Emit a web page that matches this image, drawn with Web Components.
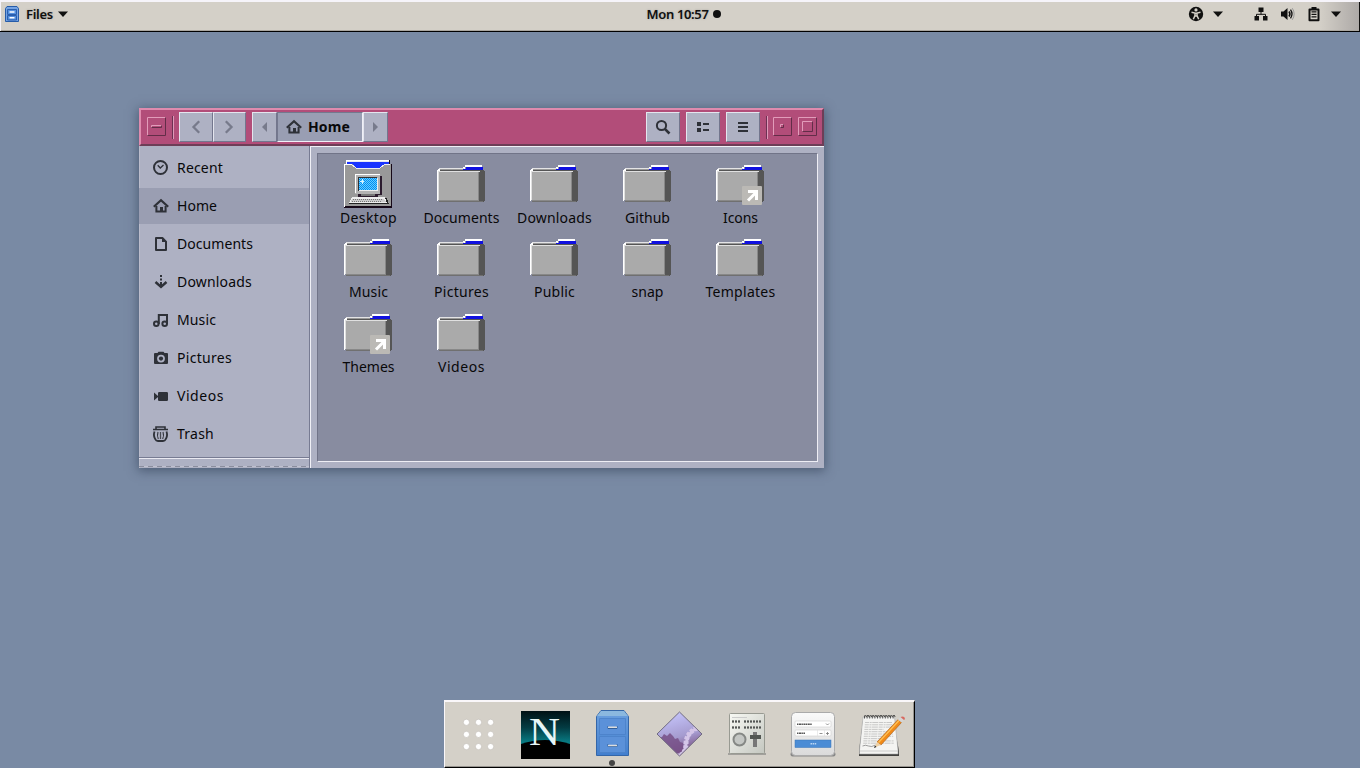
<!DOCTYPE html>
<html lang="en">
<head>
<meta charset="utf-8">
<title>Files</title>
<style>
html,body{margin:0;height:100%;overflow:hidden}
body{font-family:"Noto Sans","Open Sans",sans-serif;font-size:14px;color:#080809}
</style>
</head>
<body>
<retro-desktop></retro-desktop>
<script>
const define=(name,html,setup)=>customElements.define(name,class extends HTMLElement{
  connectedCallback(){
    if(this.shadowRoot)return;
    const t=document.createElement('template');
    t.innerHTML=typeof html==='function'?html(this):html;
    this.attachShadow({mode:'open'}).append(t.content.cloneNode(true));
    if(setup)setup(this);
  }
});

/* Label whose tracking is adjusted to reach the width in its w attribute. */
define('fit-label','<style>:host{display:inline-block;white-space:pre;line-height:20px}span{display:inline-block}</style><span><slot></slot></span>',el=>{
  const w=+el.getAttribute('w'),s=el.shadowRoot.querySelector('span');
  const n=el.textContent.length,nat=s.getBoundingClientRect().width;
  if(w){el.style.width=w+'px';s.style.letterSpacing=((w-nat)/n)+'px'}
});

const glyphs={
clock:'<circle cx="7.500" cy="7.500" r="6.500" fill="none" stroke="currentColor" stroke-width="2"/><path d="M4.700 5.300 7.300 8 10.500 5" fill="none" stroke="currentColor" stroke-width="1.300"/>',
home:'<path d="M.8 8.800 8 2.200 15.200 8.800" fill="none" stroke="currentColor" stroke-width="2.200"/><path d="M3.400 8V13.500H12.600V8" fill="none" stroke="currentColor" stroke-width="2"/><path d="M7 9h3v5H7z" fill="currentColor"/>',
doc:'<path d="M3 2h6.400L13 5.600V14H3z" fill="none" stroke="currentColor" stroke-width="2" stroke-linejoin="round"/><path d="M9 2v4h4z" fill="currentColor"/>',
down:'<path d="M7 1h2v2H7zM7 4.500h2v2H7zM7 8h2v5H7z" fill="currentColor"/><path d="M2.500 8 8 13 13.500 8" fill="none" stroke="currentColor" stroke-width="2.400"/>',
music:'<g fill="none" stroke="currentColor" stroke-width="2"><circle cx="3.300" cy="11.700" r="2.300"/><circle cx="11.700" cy="11.700" r="2.300"/><path d="M5.800 12V3H14V12"/></g>',
camera:'<path fill="currentColor" fill-rule="evenodd" d="M1 4Q1 3 2 3H4.500L5.500 1.700H10.500L11.500 3H14Q15 3 15 4V13Q15 14 14 14H2Q1 14 1 13ZM8 4.700A3.900 3.900 0 1 0 8 12.500A3.900 3.900 0 1 0 8 4.700Z"/><circle cx="8" cy="8.600" r="2.100" fill="currentColor"/>',
video:'<path fill="currentColor" d="M1 4.500 5 8V9L1 12.500zM5 5.200Q5 4 6.200 4H13.800Q15 4 15 5.200V12Q15 13 13.800 13H6.200Q5 13 5 12z"/>',
trash:'<path d="M0 3.500H15M3 3V1H12V3" fill="none" stroke="currentColor" stroke-width="1.600"/><path d="M1.500 5.500Q0 10 2.500 13.500Q3 15 5 15H10Q12 15 12.500 13.500Q15 10 13.500 5.500" fill="none" stroke="currentColor" stroke-width="1.800"/><path d="M5 6Q3.800 9.500 5.300 13M10 6Q11.200 9.500 9.700 13" fill="none" stroke="currentColor" stroke-width="1.100"/><path d="M7.500 6V13" stroke="currentColor" stroke-width="1.200" opacity=".8"/>',
search:'<circle cx="6.500" cy="6.500" r="4.600" fill="none" stroke="currentColor" stroke-width="2"/><path d="M9.800 9.800 14.500 14.500" stroke="currentColor" stroke-width="2.600"/>',
list:'<path fill="currentColor" d="M2 3h4v4H2zM2 9h4v4H2zM8 4h6v2H8zM8 10h6v2H8z"/>',
menu:'<path fill="currentColor" d="M3 3h10v2H3zM3 7h10v2H3zM3 11h10v2H3z"/>',
back:'<path d="M11.200 2.300 5.500 8 11.200 13.700" fill="none" stroke="currentColor" stroke-width="2.300"/>',
forward:'<path d="M3.800 2.300 9.500 8 3.800 13.700" fill="none" stroke="currentColor" stroke-width="2.300"/>',
left:'<path fill="currentColor" d="M10 3V13L5 8z"/>',
right:'<path fill="currentColor" d="M5 3V13L10 8z"/>',
caret:'<path fill="currentColor" d="M3 5.500h10L8 11z"/>',
dot:'<circle cx="8" cy="8" r="4" fill="currentColor"/>',
access:'<circle cx="8" cy="8" r="7.200" fill="currentColor"/><circle cx="8" cy="3.900" r="1.600" fill="#d4d0c8"/><path d="M3.500 6.200 7 7V9.500L5.300 13.200M12.500 6.200 9 7V9.500L10.700 13.200M7 7.200h2v2.800H7z" fill="none" stroke="#d4d0c8" stroke-width="1.500"/>',
network:'<path fill="currentColor" d="M5.500 1.500h5v4.500h-5zM1.500 10h4.500v4.500H1.500zM10 10h4.500v4.500H10z"/><path d="M8 6V8.300M3.500 11V8.300H12.500V11" fill="none" stroke="currentColor"/>',
volume:'<path fill="currentColor" d="M1 5.500H3.500L7.500 2V14L3.500 10.500H1z"/><path d="M9 5.500Q10.800 8 9 10.500" fill="none" stroke="currentColor" stroke-width="1.600"/><path d="M10.500 3.700Q13.500 8 10.500 12.300" fill="none" stroke="currentColor" stroke-width="1.300"/><path d="M12.300 2.200Q16 8 12.300 13.800" fill="none" stroke="#999"/>',
battery:'<path d="M3.500 3.500H12.500V14.300H3.500z" fill="none" stroke="currentColor" stroke-width="2" stroke-linejoin="round"/><path fill="currentColor" d="M5.500 1h5v2h-5zM5.500 5.200h5v1.400h-5zM5.500 7.700h5v1.400h-5zM5.500 10.200h5v1.400h-5z"/>',
cabinet:'<path d="M3 .5h10l1.500 2V15.500H1.500V2.500z" fill="#75a3e3" stroke="#265ca9"/><path d="M3.500 3.500h9v5h-9zM3.500 9.500h9v4.500h-9z" fill="#538fde" stroke="#2a5fae"/><path d="M5.500 6h5M5.500 11.800h5" stroke="#fff" stroke-width="1.500"/>'
};
define('glyph-icon',el=>`<style>:host{display:inline-block;width:16px;height:16px;flex:none}svg{display:block;overflow:visible}</style><svg width="16" height="16" viewBox="0 0 16 16">${glyphs[el.getAttribute('name')]}</svg>`);

define('top-bar',`<style>
:host{display:grid;grid-template-columns:1fr auto 1fr;height:32px;box-sizing:border-box;padding:0 16px 6px 4px;align-items:center;
background:linear-gradient(90deg,#d4d0c8 0 97%,#aca8a6 100%);border-top:2px solid #f6f4fa;border-bottom:1px solid #000;box-shadow:inset 1px 0 #f6f4fa,inset -1px 0 #111,inset 0 -1px #aaa69f;font-weight:600;font-size:13px;color:#101010}
div{display:flex;align-items:center}
fit-label{text-shadow:0 0 2px #77777780}
.c{padding-left:23px}
.r{justify-content:flex-end}
</style>
<div><glyph-icon name="cabinet"></glyph-icon><fit-label w="27" style="margin-left:6px">Files</fit-label><glyph-icon name="caret" style="margin-left:2px"></glyph-icon></div>
<div class="c"><fit-label w="62">Mon 10:57</fit-label><glyph-icon name="dot"></glyph-icon></div>
<div class="r"><glyph-icon name="access" style="margin-right:6px"></glyph-icon><glyph-icon name="caret" style="margin-right:27px"></glyph-icon><glyph-icon name="network" style="margin-right:11px"></glyph-icon><glyph-icon name="volume" style="margin-right:10px"></glyph-icon><glyph-icon name="battery" style="margin-right:6px"></glyph-icon><glyph-icon name="caret"></glyph-icon></div>`);

define('tool-button',`<style>
:host{display:flex;align-items:center;justify-content:center;box-sizing:border-box;width:34px;height:30px;background:#aeb1c3;border:1px solid;border-color:#e4e5ee #73768d #73768d #e4e5ee;color:#2e3138}
:host([dim]){color:#777a8b}
:host([active]){justify-content:flex-start;padding-left:8px;background:#999eb3;border-color:#74788e #f0f0f7 #f0f0f7 #74788e;color:#08080a;font-weight:700}
</style><slot></slot>`);

define('frame-button',el=>{const k=el.getAttribute('kind');
const box=(x,y,w,h)=>`<path d="M${x+.5} ${y+h-.5}V${y+.5}H${x+w-.5}" fill="none" stroke="#e29cba"/><path d="M${x+.5} ${y+h-.5}H${x+w-.5}V${y+.5}" fill="none" stroke="#632d48"/>`;
const inner={min:box(4,8,11,3),dot:box(7,7,4,4),max:box(4,4,11,11)}[k];
return `<style>:host{display:block;width:19px;height:19px;margin-bottom:1px}svg{display:block}</style><svg width="19" height="19">${box(0,0,19,19)}${inner}</svg>`});

define('title-bar',`<style>
:host{display:flex;align-items:center;height:38px;box-sizing:border-box;padding:0 5px 0 6px;background:#b24d79;border:2px solid;border-color:#df8bae #6d3e57 #6d3e57 #df8bae}
.sep{width:1px;height:23px;background:#6d3154;border-right:1px solid #df9ab9}
.g{display:flex}
.s{flex:1}
</style>
<frame-button kind="min"></frame-button><i class="sep" style="margin:0 5px 0 6px"></i>
<div class="g"><tool-button dim><glyph-icon name="back"></glyph-icon></tool-button><tool-button dim style="width:33px"><glyph-icon name="forward"></glyph-icon></tool-button></div>
<div class="g" style="margin-left:6px"><tool-button dim style="width:25px"><glyph-icon name="left"></glyph-icon></tool-button><tool-button active style="width:86px"><glyph-icon name="home" style="color:#2e3138;margin-right:6px"></glyph-icon><fit-label w="42">Home</fit-label></tool-button><tool-button dim style="width:25px"><glyph-icon name="right"></glyph-icon></tool-button></div>
<span class="s"></span>
<div class="g" style="gap:6px"><tool-button><glyph-icon name="search"></glyph-icon></tool-button><tool-button><glyph-icon name="list"></glyph-icon></tool-button><tool-button><glyph-icon name="menu"></glyph-icon></tool-button></div>
<i class="sep" style="margin:0 5px 0 6px"></i><frame-button kind="dot"></frame-button><frame-button kind="max" style="margin-left:6px"></frame-button>`);

define('place-row',el=>`<style>
:host{display:flex;align-items:center;height:36px;margin:1px 0;padding-left:14px;color:#08080a}
:host([selected]){background:#9a9eb2}
glyph-icon{color:#2e3138;margin-right:8px}
</style><glyph-icon name="${el.getAttribute('icon')}"></glyph-icon><slot></slot>`);

const places=[['clock','Recent',46],['home','Home',40],['doc','Documents',76],['down','Downloads',75],['music','Music',39],['camera','Pictures',55],['video','Videos',47],['trash','Trash',37]];
define('places-bar',`<style>
:host{display:flex;flex-direction:column;width:171px;box-sizing:border-box;padding-top:3px;background:#aeb1c3;box-shadow:inset 1px 0 #bbbdcb}
.end{height:9px;margin-top:4px;border-top:1px solid #777b92;box-shadow:inset 0 1px #e9e9f1;background:repeating-linear-gradient(90deg,#8b8e9e 0 5px,#c0c1cf 5px 9px) 0 100%/100% 1px no-repeat}
</style>${places.map(([i,t,w])=>`<place-row icon="${i}"${t=='Home'?' selected':''}><fit-label w="${w}">${t}</fit-label></place-row>`).join('')}<div class="end"></div>`);

const folder=`<g shape-rendering="crispEdges"><path fill="#555" d="M42 10h4l2 2V40l-2 2h-4z"/><path fill="#707070" d="M2 41h44v1H2z"/><path fill="#fff" d="M28 5H45V7H28zM26 7h2v2h-2z"/><path fill="#e4e4e6" d="M2 8H27V9H2z"/><path fill="#fff" d="M0 10h1v31H0zM1 9h2v2H1z"/><path fill="#1010e0" d="M29 7H46V10H26V9h3z"/><path fill="#555" d="M3 10H45V11H3z"/><path fill="#aaa" d="M2 12H41V41H2z"/><path fill="#e0e0e0" d="M2 11H43V12H2zM1 11h1V40H1z"/><path fill="#999" d="M3 9H26V10H3z"/><path fill="#888" d="M41 12h1V41h-1zM2 40h40v1H2z"/></g>`;
const link=`<rect x="26" y="26" width="20" height="19" rx="1" fill="#bbb9b5"/><path d="M32 31.500H40.500V40" fill="none" stroke="#fff" stroke-width="3"/><path d="M32 40.500 39.500 33" stroke="#fff" stroke-width="3"/>`;
let keys='';for(let r=0;r<2;r++)for(let c=0;c<15;c++)keys+=`<path fill="#777" d="M${9+c*2-r*1} ${39+r*2}h1v1h-1z"/>`;
let dither='';for(let y=18;y<30;y++)for(let x=15+(y%2);x<33;x+=2)dither+=`M${x} ${y}h1v1h-1z`;
const computer=`<g shape-rendering="crispEdges"><path fill="#160818" d="M1 4H48V48H0V46H1z"/><path fill="#999" d="M1 4H47V46H1z"/><path fill="#fff" d="M2 0H46V1H2zM2 1h1v4H2zM0 4H1V47H0zM0 4H8V5H0z"/><path fill="#1a34ff" d="M3 2H45V4H40L36 8H12L8 4H3z"/><path fill="#e8e8f4" d="M3 1H45V2H3z"/><path fill="#160818" d="M45 0h1v5h-1z"/><path fill="#eee" d="M8 5h2v1H8zM9 6h2v1H9zM11 7h1v1h-1zM12 8H36V9H12zM36 7h1v1h-1zM37 6h2v1h-2zM38 5h2v1h-2zM40 4h6v1h-6z"/><path fill="#2c1c2e" d="M14 16H38V35H34V37H14V34H12z"/><path fill="#b4b4b4" d="M11 15H36V34H11z"/><path fill="#fff" d="M11 14H36V15H11zM11 15h1V33h-1z"/><path fill="#333" d="M14 17H33V18H15V31H14z"/><path fill="#eee" d="M15 31H34V18H33V30H15z"/><path fill="#008cf4" d="M15 18H33V30H15z"/><path fill="#62ceff" d="${dither}"/><path fill="#d8f4ff" d="M16 21h2v-2h1v2h1v1h-1v2h-1v-2h-2z"/><path fill="#777" d="M17 34H31V36H17z"/><path fill="#eee" d="M8 37H41L43 43H5L6 41z"/><path fill="#ccc" d="M8 39H40L42 42H7z"/><path fill="#222" d="M41 38h2l2 6H5V43H43z"/>${keys}</g>`;
define('file-item',el=>`<style>:host{display:flex;flex-direction:column;align-items:center;width:93px}svg{display:block}div{padding-left:2px}</style><svg width="48" height="48">${el.getAttribute('kind')=='desktop'?computer:folder}${el.getAttribute('kind')=='link'?link:''}</svg><div><slot></slot></div>`);

const files=[['Desktop',57,'desktop'],['Documents',76],['Downloads',75],['Github',45],['Icons',35,'link'],['Music',39],['Pictures',55],['Public',41],['snap',32],['Templates',70],['Themes',52,'link'],['Videos',47]];
define('file-grid',`<style>
:host{display:grid;grid-template-columns:repeat(5,93px);grid-template-rows:74px 75px 74px;align-content:start;flex:1;box-sizing:border-box;padding:6px 0 0 3px;background:#888ca0;border:1px solid;border-color:#717488 #eeeef5 #eeeef5 #717488}
</style>${files.map(([t,w,k])=>`<file-item kind="${k||'folder'}"><fit-label w="${w}">${t}</fit-label></file-item>`).join('')}`);

define('file-window',`<style>
:host{display:flex;flex-direction:column;width:685px;height:360px;background:#aeb1c3;box-shadow:0 2px 10px 1px #28344b88}
.body{display:flex;flex:1;min-height:0}
.view{display:flex;flex:1;box-sizing:border-box;padding:6px;border-left:1px solid #f0f0f6;border-top:1px solid #f0f0f6}
places-bar{border-right:1px solid #777b92}
</style><title-bar></title-bar><div class="body"><places-bar></places-bar><div class="view"><file-grid></file-grid></div></div>`);

let teeth='';for(let i=0;i<12;i++)teeth+=`<path d="M${864.500+i*2.600} 718.500v-2.500q.9-2 1.800 0v1" fill="none" stroke="#444" stroke-width=".9"/>`;
let lines='';for(let i=0;i<10;i++)lines+=`<path d="M${865-i*.2} ${722.500+i*2.300}H${(i%4==3?883:892)+i*.2}" stroke="#bdbdbb" stroke-width=".8" stroke-dasharray="4 .7 2 .6 6 .8"/>`;
let sl='';for(const x of [732,735,738,744,747,750,753,756,759])for(const y of [720,726])sl+=`<path d="M${x} ${y}h2v3h-2z" fill="#888d88"/><path d="M${x} ${y+1}h2v1h-2z" fill="#555"/>`;
let dots='';for(const y of [722.3,734.4,746.6])for(const x of [466.4,478.5,490.6])dots+=`<circle cx="${x}" cy="${y}" r="3.100" fill="#fff" stroke="#bdb9b2" stroke-width=".6"/>`;
const apps={
grid:dots,
netscape:`<defs><linearGradient id="n" x2="0" y2="1"><stop stop-color="#001014"/><stop offset=".35" stop-color="#033c43"/><stop offset=".65" stop-color="#087b83"/></linearGradient></defs><path fill="url(#n)" d="M521 711h49v48h-49z"/><path fill="#000" d="M521 744Q545 736 570 744V759H521z"/><text x="529" y="744.500" textLength="31" lengthAdjust="spacingAndGlyphs" font-family="Liberation Serif,serif" font-size="40" fill="#e6f6f6">N</text>`,
cabinet:`<defs><linearGradient id="c" x2="0" y2="1"><stop stop-color="#6ca0df"/><stop offset="1" stop-color="#427fce"/></linearGradient></defs><path d="M601 710.500H624L628.500 716.500V755.500H596.500V716.500z" fill="url(#c)" stroke="#3466a8"/><path d="M601 711H624L628 716H597z" fill="#8bb8df"/><path d="M599.500 718.500H625.500V734.500H599.500zM599.500 736.500H625.500V752.500H599.500z" fill="#5b91d9" stroke="#4a80c8" stroke-width=".8"/><path d="M608 726V728.500H617V726M608 744V746.500H617V744" fill="none" stroke="#325f98"/><path d="M608 727.300H617M608 745.500H617" stroke="#ddd" stroke-width="1.500"/><circle cx="612" cy="763" r="3" fill="#444"/>`,
gears:`<defs><linearGradient id="g" x1=".2" y1="0" x2=".5" y2="1"><stop stop-color="#c8c8ff"/><stop offset=".6" stop-color="#a59bcf"/><stop offset="1" stop-color="#75467a"/></linearGradient></defs><clipPath id="d"><path d="M679.500 712 702 734 679.500 756 657 734z"/></clipPath><g clip-path="url(#d)"><path fill="url(#g)" d="M657 712h45v44h-45z"/><path d="M657 738l5-1 2-3 3 2 3-3 3 3 2 3 3-1 2 4 3 1v4l4 3-2 7h-30z" fill="#775087" opacity=".85"/><path d="M697 728Q686 733 686 744T677 756" fill="none" stroke="#d4c5e8" stroke-width="5" stroke-dasharray="3 1.400"/><path d="M697 728Q687 733 686 744T677 756" fill="none" stroke="#d4c5e8" stroke-width="3"/></g><path d="M679.500 712 702 734 679.500 756 657 734z" fill="none" stroke="#716c81"/>`,
control:`<defs><linearGradient id="k" x2="1" y2="1"><stop stop-color="#f8f9f4"/><stop offset="1" stop-color="#c4c7c0"/></linearGradient></defs><path d="M728 753h38v2h-38z" fill="#7778" /><rect x="729.500" y="713.500" width="35" height="40" rx="1" fill="url(#k)" stroke="#989a92"/><path d="M732 717.500h15" stroke="#ccc"/>${sl}<circle cx="739.500" cy="739.500" r="6" fill="#c4c7c4" stroke="#858885" stroke-width="2"/><path d="M755 732v15" stroke="#777" stroke-width="4"/><path d="M750 735h11v4h-11z" fill="#525652"/>`,
form:`<defs><linearGradient id="f" x2="0" y2="1"><stop stop-color="#fafafa"/><stop offset="1" stop-color="#dadada"/></linearGradient></defs><rect x="790.500" y="752" width="45" height="4.500" rx="2" fill="#888"/><rect x="791.500" y="712.500" width="43" height="43" rx="4" fill="url(#f)" stroke="#aaa"/><rect x="795" y="721" width="36" height="6" rx="1" fill="#fff" stroke="#ccc" stroke-width=".6"/><rect x="795" y="730" width="36" height="6" rx="1" fill="#fff" stroke="#ccc" stroke-width=".6"/><path d="M797 724.200h15M797 733.200h8" stroke="#555" stroke-width="1.400" stroke-dasharray="1.500 .5 2 .4"/><path d="M826 723.500l1.500 1.500 1.500-1.500M819.500 733.500h3M826 733.500h3M827.500 732v3" fill="none" stroke="#777" stroke-width=".8"/><path d="M817.500 730v6M824.500 730v6" stroke="#ddd" stroke-width=".6"/><rect x="795" y="740" width="36" height="7.500" fill="#4b8cd5" stroke="#3975b7" stroke-width=".5"/><path d="M810.500 743.800h6" stroke="#bad5f3" stroke-width="1.600" stroke-dasharray="1.500 .6"/>`,
notes:`<path d="M859 751L863 720H893L899 751V756H859z" fill="#41413f"/><path d="M863 717H894.500L898 750V754H859.500V750z" fill="#f4f4f2" stroke="#aaa" stroke-width=".6"/><path d="M860 751H898" stroke="#ccc"/>${lines}${teeth}<path d="M862.500 746q3-1.500 6 0t7-1" fill="none" stroke="#777" stroke-width=".7"/><path d="M877 742L898 719.500 901.500 722.500 881 745z" fill="#f18a18" stroke="#a45a18" stroke-width=".6"/><path d="M878.500 742.500L899 720.500" stroke="#ffc054" stroke-width="1.300"/><path d="M898 719.500L900.500 717 904 720 901.500 722.500z" fill="#d5d5d5"/><path d="M900.500 717Q904.500 715.500 905 719L904 720z" fill="#d86a60"/><path d="M877 742 881 745 874.500 747.500z" fill="#eed0a4"/><path d="M874 748l1-2.500 1.500 1.500z" fill="#222"/>`
};
define('dock-app',el=>{const i=+el.getAttribute('slot-index');return `<style>:host{display:block;width:67px;height:64px}svg{display:block}</style><svg width="67" height="64" viewBox="${445+67*i} 702 67 64">${apps[el.getAttribute('name')]}</svg>`});
define('app-dock',`<style>
:host{display:flex;box-sizing:border-box;width:471px;height:68px;background:#d4d0c8;border-top:2px solid #faf7fa;border-left:1px solid #faf7fa;border-right:1px solid #000;border-bottom:1px solid #000;box-shadow:inset -1px -1px #96938e}
</style>${Object.keys(apps).map((n,i)=>`<dock-app name="${n}" slot-index="${i}"></dock-app>`).join('')}`);

define('retro-desktop',`<style>
:host{display:flex;flex-direction:column;width:1360px;height:768px;background:#798aa4}
.space{flex:1;padding:76px 0 0 139px}
.foot{display:flex;padding-left:444px}
</style><top-bar></top-bar><div class="space"><file-window></file-window></div><div class="foot"><app-dock></app-dock></div>`);
</script>
</body>
</html>
